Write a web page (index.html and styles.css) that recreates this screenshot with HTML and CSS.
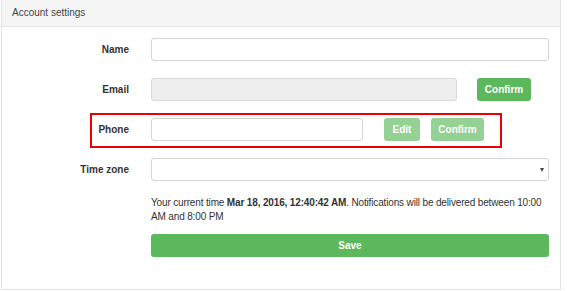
FILE: index.html
```html
<!DOCTYPE html>
<html>
<head>
<meta charset="utf-8">
<link rel="stylesheet" href="styles.css">
</head>
<body>
<div class="panel">
  <div class="panel-heading">Account settings</div>
  <div class="panel-body">
    <div class="row">
      <label class="label">Name</label>
      <div class="controls"><input class="input input-full" type="text"></div>
    </div>
    <div class="row">
      <label class="label">Email</label>
      <div class="controls">
        <input class="input input-email" type="text" disabled>
        <button class="btn btn-email">Confirm</button>
      </div>
    </div>
    <div class="row row-phone">
      <div class="highlight"></div>
      <label class="label">Phone</label>
      <div class="controls">
        <input class="input input-phone" type="text">
        <button class="btn btn-disabled btn-edit">Edit</button>
        <button class="btn btn-disabled btn-confirm2">Confirm</button>
      </div>
    </div>
    <div class="row">
      <label class="label">Time zone</label>
      <div class="controls">
        <div class="select"><span class="arrow"></span></div>
      </div>
    </div>
    <div class="row row-info">
      <div></div>
      <div class="controls-col">
        <p class="info">Your current time <b>Mar 18, 2016, 12:40:42 AM</b>. Notifications will be delivered between 10:00 AM and 8:00 PM</p>
        <button class="btn btn-save">Save</button>
      </div>
    </div>
  </div>
</div>
</body>
</html>
```
FILE: styles.css
```css
html, body {
  margin: 0;
  padding: 0;
  background: #fff;
  font-family: "Liberation Sans", Arial, sans-serif;
  color: #333;
}
.panel {
  margin-left: 1px;
  width: 558px;
  height: 289px;
  border: 1px solid #e3e3e3;
  border-top: none;
  box-sizing: content-box;
}
.panel-heading {
  height: 26px;
  background: #f5f5f5;
  border-bottom: 1px solid #e6e6e6;
  font-size: 10px;
  line-height: 26px;
  padding-left: 10px;
  color: #444;
}
.panel-body {
  padding: 11px 10px 0 0;
}
.row {
  display: grid;
  grid-template-columns: 128px 1fr;
  column-gap: 21px;
  align-items: center;
  height: 23px;
  margin-bottom: 17px;
  position: relative;
}
.label {
  text-align: right;
  font-weight: bold;
  font-size: 10px;
  color: #333;
  padding-right: 1px;
}
.controls {
  display: flex;
  align-items: center;
  height: 23px;
}
.input {
  box-sizing: border-box;
  height: 23px;
  border: 1px solid #d4d4d4;
  border-radius: 3px;
  background: #fff;
  padding: 0 6px;
  margin: 0;
  font: inherit;
}
.input-full { width: 398px; }
.input-email { width: 306px; background: #eeeeee; border-color: #d8d8d8; }
.input-phone { width: 212px; }
.btn {
  box-sizing: border-box;
  height: 23px;
  border: none;
  border-radius: 3px;
  background: #5cb85c;
  color: #fff;
  font-family: "Liberation Sans", Arial, sans-serif;
  font-weight: bold;
  font-size: 10px;
  padding: 0;
  margin: 0;
}
.btn-email { width: 54px; margin-left: 20px; }
.btn-disabled { background: #95d095; }
.btn-edit { width: 36px; margin-left: 21px; }
.btn-confirm2 { width: 53px; margin-left: 11px; }
.highlight {
  position: absolute;
  left: 88px;
  top: -5px;
  width: 408px;
  height: 31px;
  border: 2px solid #ee0000;
  pointer-events: none;
}
.select {
  box-sizing: border-box;
  width: 398px;
  height: 23px;
  border: 1px solid #d4d4d4;
  border-radius: 3px;
  position: relative;
}
.arrow {
  position: absolute;
  right: 4px;
  top: 9px;
  width: 0;
  height: 0;
  border-left: 2.5px solid transparent;
  border-right: 2.5px solid transparent;
  border-top: 4px solid #444;
}
.row-info {
  height: auto;
  align-items: start;
  margin-top: -2px;
}
.controls-col {
  display: flex;
  flex-direction: column;
}
.info {
  margin: 0;
  font-size: 10px;
  line-height: 14px;
  letter-spacing: -0.15px;
  color: #333;
}
.btn-save {
  width: 398px;
  margin-top: 10px;
}
```
